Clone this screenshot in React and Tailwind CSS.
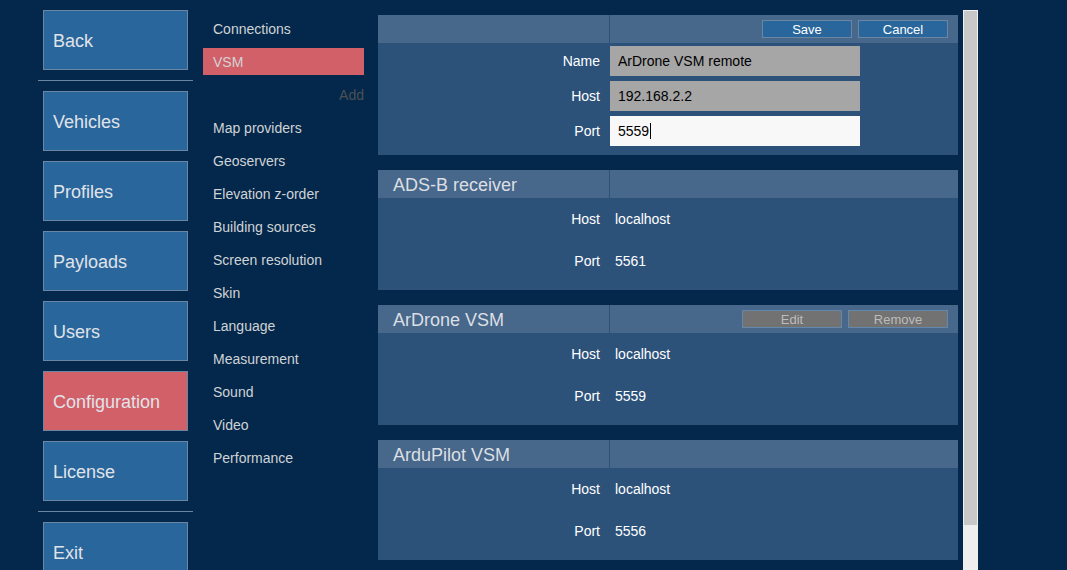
import { useState } from "react";

const mainMenu = [
  ["Back"],
  ["Vehicles", "Profiles", "Payloads", "Users", "Configuration", "License"],
  ["Exit"],
];

const sections = [
  "Map providers",
  "Geoservers",
  "Elevation z-order",
  "Building sources",
  "Screen resolution",
  "Skin",
  "Language",
  "Measurement",
  "Sound",
  "Video",
  "Performance",
];

const connections = [
  { name: "ADS-B receiver", host: "localhost", port: "5561" },
  { name: "ArDrone VSM", host: "localhost", port: "5559", editable: true },
  { name: "ArduPilot VSM", host: "localhost", port: "5556" },
];

function MenuButton({ label }) {
  const active = label === "Configuration";
  return (
    <button
      type="button"
      aria-current={active ? "page" : undefined}
      className={`mx-[5px] h-[60px] shrink-0 border border-[#6a86a3] px-[9px] pt-0.5 text-left text-lg text-[#e0e3e8] ${
        active ? "bg-[#d26069]" : "bg-[#29669c]"
      }`}
    >
      {label}
    </button>
  );
}

function SectionButton({ label, active = false }) {
  return (
    <button
      type="button"
      className={`h-[27px] shrink-0 px-2.5 text-left ${active ? "bg-[#d26069]" : ""}`}
    >
      {label}
    </button>
  );
}

function PanelHeader({ title, children }) {
  return (
    <header className="flex h-7 bg-[#47688b]">
      <h2 className="w-[232px] shrink-0 border-r border-[#2c527a] px-[15px] pt-px text-lg leading-7 text-[#dcdfe3]">
        {title}
      </h2>
      <div className="flex flex-1 items-center justify-end gap-1.5 pr-2.5 text-[13px]">
        {children}
      </div>
    </header>
  );
}

function Field({ id, label, value, onChange, focused = false }) {
  return (
    <div className="flex items-center">
      <label htmlFor={id} className="w-[232px] shrink-0 pr-2.5 text-right">
        {label}
      </label>
      <div className="relative w-[250px]">
        <input
          id={id}
          value={value}
          onChange={(e) => onChange(e.target.value)}
          className={`block h-[30px] w-full px-2 text-black caret-transparent outline-none ${
            focused ? "bg-[#f8f8f8]" : "bg-[#a6a6a6]"
          }`}
        />
        {focused && <span className="absolute top-[7px] left-10 h-4 w-px bg-black" />}
      </div>
    </div>
  );
}

function EditPanel() {
  const [form, setForm] = useState({
    name: "ArDrone VSM remote",
    host: "192.168.2.2",
    port: "5559",
  });
  const set = (key) => (value) => setForm({ ...form, [key]: value });
  const button = "h-[18px] w-[90px] border border-[#6a86a3] bg-[#29669c] pt-px leading-4";
  return (
    <form className="bg-[#2c527a]" onSubmit={(e) => e.preventDefault()}>
      <PanelHeader>
        <button type="submit" className={button}>Save</button>
        <button type="button" className={button}>Cancel</button>
      </PanelHeader>
      <div className="flex flex-col gap-[5px] pt-[3px] pb-[9px]">
        <Field id="name" label="Name" value={form.name} onChange={set("name")} />
        <Field id="host" label="Host" value={form.host} onChange={set("host")} />
        <Field id="port" label="Port" value={form.port} onChange={set("port")} focused />
      </div>
    </form>
  );
}

function ConnectionPanel({ name, host, port, editable }) {
  const button =
    "h-[18px] w-[100px] border border-[#6488ac] bg-[#727272] pt-px leading-4 text-[#bcbcbc]";
  return (
    <section className="bg-[#2c527a]">
      <PanelHeader title={name}>
        {editable && (
          <>
            <button type="button" disabled className={button}>Edit</button>
            <button type="button" disabled className={button}>Remove</button>
          </>
        )}
      </PanelHeader>
      <dl className="grid grid-cols-[232px_1fr] pb-2 leading-[42px]">
        <dt className="pr-2.5 text-right">Host</dt>
        <dd className="pl-[5px]">{host}</dd>
        <dt className="pr-2.5 text-right">Port</dt>
        <dd className="pl-[5px]">{port}</dd>
      </dl>
    </section>
  );
}

export default function App() {
  return (
    <div className="flex h-screen overflow-hidden bg-[#04284b] pr-[89px] pl-[38px] font-['Liberation_Sans',Arial,sans-serif] text-sm text-white">
      <nav className="flex w-[155px] shrink-0 flex-col gap-2.5 pt-2.5">
        {mainMenu.map((group, i) => (
          <div key={group[0]} className="flex flex-col gap-2.5">
            {i > 0 && <hr className="border-[#6a86a3]" />}
            {group.map((label) => (
              <MenuButton key={label} label={label} />
            ))}
          </div>
        ))}
      </nav>

      <nav className="ml-2.5 flex w-[161px] shrink-0 flex-col gap-1.5 pt-[15px] text-[#d0d3d6]">
        <SectionButton label="Connections" />
        <SectionButton label="VSM" active />
        <button type="button" disabled className="h-[27px] shrink-0 self-end text-[#4b5055]">
          Add
        </button>
        {sections.map((label) => (
          <SectionButton key={label} label={label} />
        ))}
      </nav>

      <main className="ml-3.5 flex min-w-0 flex-1 flex-col gap-[15px] pt-[15px]">
        <EditPanel />
        {connections.map((c) => (
          <ConnectionPanel key={c.name} {...c} />
        ))}
      </main>

      <div className="ml-[5px] flex w-[15px] shrink-0 flex-col pt-2.5">
        <div className="flex-1 border border-b-0 border-[#f0f0f0] bg-[#eeeeee]">
          <div className="h-[92%] bg-[#c8c8c8]" />
        </div>
      </div>
    </div>
  );
}
